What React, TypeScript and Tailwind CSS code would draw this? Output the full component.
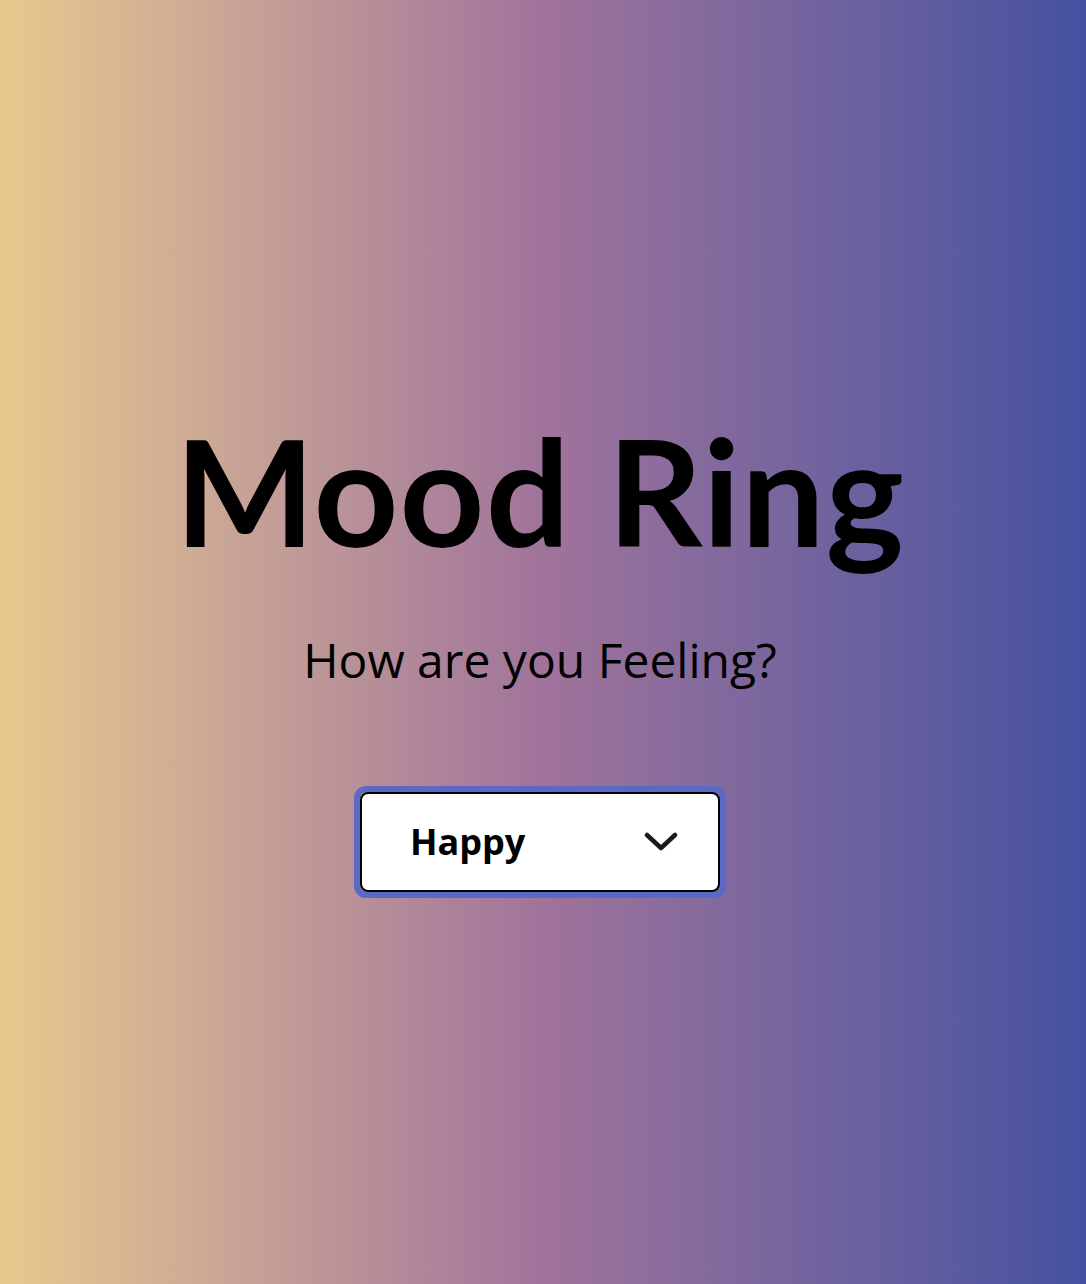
export default function App() {
  return (
    <main className="min-h-[1284px] w-full flex flex-col items-center pr-[6px] bg-gradient-to-r from-[#e8c98c] via-[#a0739a] to-[#4451a0] font-['Open_Sans',sans-serif] text-black">
      {/* Titre */}
      <h1 className="mt-[402px] text-[148px] leading-[1.2] font-bold tracking-[1px] font-['Lato',sans-serif]">
        Mood Ring
      </h1>

      <p className="mt-[50px] text-[48px] leading-tight">How are you Feeling?</p>

      {/* Sélecteur d'humeur */}
      <div className="mt-[96px] rounded-[12px] border-[6px] border-[#5a69c6]">
        <button className="flex items-center justify-between w-[360px] h-[100px] pl-[48px] pr-[40px] bg-white border-2 border-black rounded-[8px]">
          <span className="text-[36px] font-bold">Happy</span>
          <svg width="34" height="22" viewBox="0 0 34 22" fill="none" className="text-[#1a1a1a]">
            <path d="M3 4 L17 17 L31 4" stroke="currentColor" strokeWidth="4.5" strokeLinecap="round" strokeLinejoin="round" />
          </svg>
        </button>
      </div>
    </main>
  )
}
